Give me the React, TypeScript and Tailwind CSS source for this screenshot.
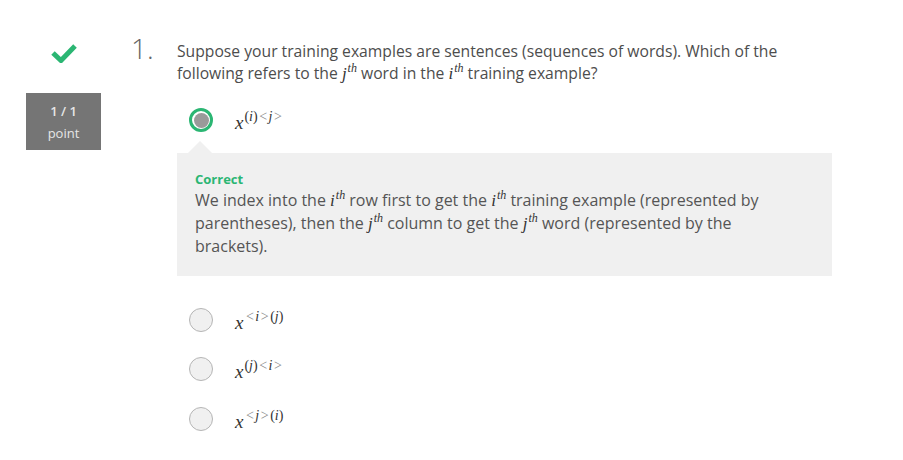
import React from "react";

const serif = { fontFamily: '"Liberation Serif", "DejaVu Serif", serif' };

function Sup({ base, sup }: { base: string; sup: string }) {
  return (
    <span className="text-[#333] whitespace-nowrap leading-none" style={serif}>
      <span className="italic text-[17px] leading-none">{base}</span>
      <span className="italic text-[12px] leading-none relative -top-[7px] ml-[1px]">{sup}</span>
    </span>
  );
}

function MathX({ sup }: { sup: React.ReactNode }) {
  return (
    <span className="text-[#333] whitespace-nowrap leading-none" style={serif}>
      <span className="italic text-[19px]">x</span>
      <span className="text-[14px] relative -top-[8px] ml-[1px]">{sup}</span>
    </span>
  );
}

function Radio({ selected }: { selected?: boolean }) {
  if (selected) {
    return (
      <div className="w-[24px] h-[24px] rounded-full border-[3px] border-[#2bb673] bg-white flex items-center justify-center shrink-0">
        <div className="w-[15px] h-[15px] rounded-full bg-[#9a9a9a]" />
      </div>
    );
  }
  return (
    <div className="w-[24px] h-[24px] rounded-full border-[1.5px] border-[#b5b5b5] bg-[#f0f0f0] shrink-0" />
  );
}

function Option({ sup, selected, className }: { sup: React.ReactNode; selected?: boolean; className?: string }) {
  return (
    <div className={"flex items-center h-[24px] ml-[12px] " + (className ?? "")}>
      <Radio selected={selected} />
      <div className="ml-[22px] leading-none pt-[4px]">
        <MathX sup={sup} />
      </div>
    </div>
  );
}

const Lt = () => <span className="text-[#888] mx-[1.5px]">&lt;</span>;
const Gt = () => <span className="text-[#888] mx-[1.5px]">&gt;</span>;

export default function App() {
  return (
    <div
      className="w-[903px] h-[460px] bg-white flex text-[#4a4a4a]"
      style={{ fontFamily: '"Open Sans", "Noto Sans", sans-serif' }}
    >
      <div className="ml-[26px] w-[75px] flex flex-col items-center shrink-0">
        <svg className="mt-[43px]" width="28" height="20" viewBox="0 0 28 20">
          <path d="M3 10 L11 17.5 L25 3" fill="none" stroke="#2bb673" strokeWidth="5" strokeLinecap="butt" strokeLinejoin="miter" />
        </svg>
        <div className="mt-[30px] w-[75px] h-[57px] bg-[#757575] text-[#e6e6e6] text-[13px] leading-[22px] flex flex-col items-center justify-center font-semibold">
          <div>1 / 1</div>
          <div className="font-normal">point</div>
        </div>
      </div>
      <div className="ml-[30px] w-[46px] pt-[33px] text-[28px] font-light leading-[30px] text-[#666] shrink-0">1.</div>
      <div className="w-[655px] pt-[40px]">
        <div className="text-[15.7px] leading-[22px] text-[#4d4d4d]">
          Suppose your training examples are sentences (sequences of words). Which of the following refers to the <Sup base="j" sup="th" /> word in the <Sup base="i" sup="th" /> training example?
        </div>
        <Option className="mt-[24px]" selected sup={<>(<i>i</i>)<Lt /><i>j</i><Gt /></>} />
        <div className="relative mt-[21px] bg-[#f0f0f0] pl-[18px] pr-[50px] pt-[17px] pb-[18px]">
          <div className="absolute -top-[12px] left-[11px] w-0 h-0 border-l-[12px] border-r-[12px] border-b-[12px] border-l-transparent border-r-transparent border-b-[#f0f0f0]" />
          <div className="text-[13px] font-bold text-[#2bb673] leading-[18px]">Correct</div>
          <div className="text-[16px] leading-[23px] mt-[1px] text-[#555]">
            We index into the <Sup base="i" sup="th" /> row first to get the <Sup base="i" sup="th" /> training example (represented by parentheses), then the <Sup base="j" sup="th" /> column to get the <Sup base="j" sup="th" /> word (represented by the brackets).
          </div>
        </div>
        <Option className="mt-[32px]" sup={<><Lt /><i>i</i><Gt />(<i>j</i>)</>} />
        <Option className="mt-[25px]" sup={<>(<i>j</i>)<Lt /><i>i</i><Gt /></>} />
        <Option className="mt-[26px]" sup={<><Lt /><i>j</i><Gt />(<i>i</i>)</>} />
      </div>
    </div>
  );
}
